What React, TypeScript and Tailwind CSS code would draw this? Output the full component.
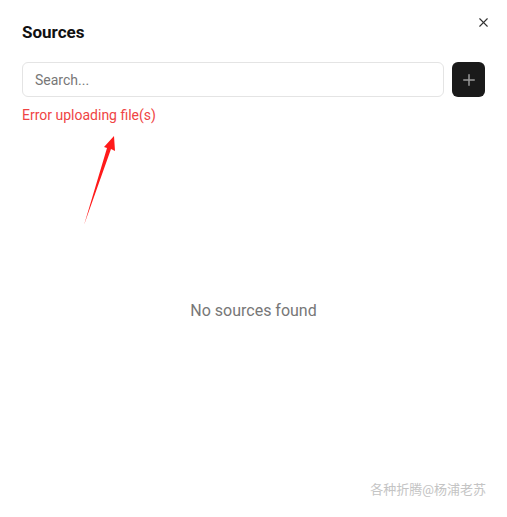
import { X, Plus } from "lucide-react";

export default function App() {
  return (
    <div
      className="relative flex h-[517px] w-[507px] flex-col bg-white px-[22px] pt-[21px] text-[#111]"
      style={{ fontFamily: "Roboto, 'Noto Sans CJK SC', sans-serif" }}
    >
      <button className="absolute right-[16px] top-[15px] text-[#333]">
        <X size={15} strokeWidth={1.8} />
      </button>
      <h2 className="text-[17px] font-bold leading-[22px]">Sources</h2>
      <div className="mt-[19px] flex items-center gap-2">
        <input
          placeholder="Search..."
          className="h-[35px] flex-1 rounded-md border border-[#e4e4e4] px-3 text-[14px] text-[#333] placeholder:text-[#777] outline-none"
        />
        <button className="flex h-[35px] w-[33px] items-center justify-center rounded-md bg-[#1a1a1a] text-[#9a9a9a]">
          <Plus size={18} strokeWidth={2} />
        </button>
      </div>
      <p className="mt-[8px] text-[14px] leading-[20px] text-[#ef4444]">Error uploading file(s)</p>
      <div className="flex flex-1 items-start justify-center pt-[174px]">
        <p className="text-[16px] text-[#777]">No sources found</p>
      </div>
      <svg className="absolute left-[80px] top-[134px]" width="40" height="95" viewBox="0 0 40 95">
        <path d="M4 91 L27 14 L24 13 L34 2 L35 17 L31 15 Z" fill="#ff1a1a" />
      </svg>
      <p className="absolute right-[21px] top-[480px] text-[13px] text-[#c4c4c4]">各种折腾@杨浦老苏</p>
    </div>
  );
}
